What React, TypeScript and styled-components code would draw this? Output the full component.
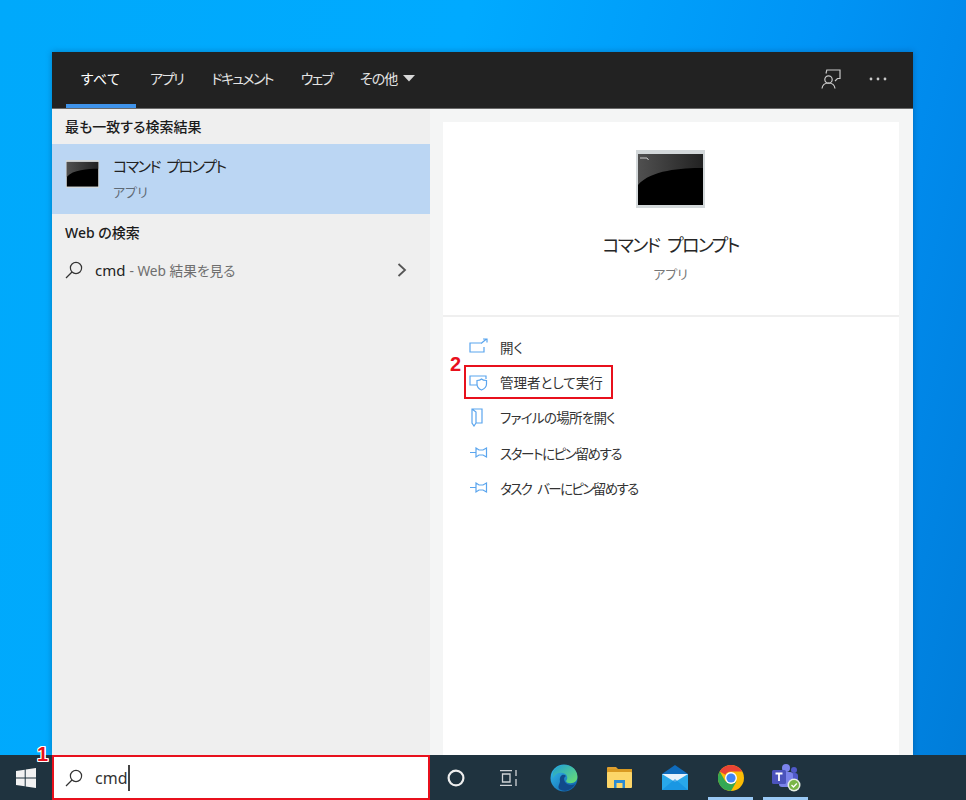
import React from "react";
import styled, { createGlobalStyle } from "styled-components";

const Global = createGlobalStyle`
  html, body { margin: 0; padding: 0; width: 966px; height: 800px; overflow: hidden; }
  body { font-family: "Noto Sans", "Noto Sans CJK JP", sans-serif; font-feature-settings: "palt"; }
  * { box-sizing: border-box; }
`;

const Desktop = styled.div`
  position: relative;
  width: 966px;
  height: 800px;
  padding-top: 52px;
  display: flex;
  flex-direction: column;
  background: linear-gradient(105deg, #00a9fb 0%, #00aaff 40%, #0094f5 70%, #008aec 82%, #007cd8 100%);
`;
const Panel = styled.div`
  margin-left: 52px;
  width: 861px;
  height: 703px;
  display: flex;
  flex-direction: column;
  box-shadow: 0 0 6px rgba(0, 40, 80, 0.35);
`;
const Header = styled.div`
  height: 57px;
  background: #222222;
  border-bottom: 1px solid #6a6a6a;
  display: flex;
  padding-left: 14px;
  align-items: stretch;
`;
const Tab = styled.div<{ $active?: boolean; $ls?: number }>`
  padding: 0 14px;
  min-width: ${(p) => (p.$active ? "70px" : "0")};
  display: flex;
  align-items: center;
  gap: 6px;
  color: ${(p) => (p.$active ? "#fff" : "#e4e4e4")};
  font-size: 14px;
  letter-spacing: ${(p) => p.$ls ?? 0}px;
  font-feature-settings: ${(p) => (p.$active ? '"palt" 0' : '"palt" 1')};
  border-bottom: 4px solid ${(p) => (p.$active ? "#3f93ea" : "transparent")};
`;
const HeaderActions = styled.div`
  margin-left: auto;
  display: flex;
  align-items: center;
  padding-right: 26px;
  gap: 28px;
  padding-bottom: 2px;
`;
const Body = styled.div`
  flex: 1;
  display: flex;
  min-height: 0;
`;
const Left = styled.div`
  width: 378px;
  background: #efefef;
  display: flex;
  flex-direction: column;
`;
const SectionLabel = styled.div<{ $h: number }>`
  height: ${(p) => p.$h}px;
  padding: 0 0 2px 13px;
  display: flex;
  align-items: center;
  font-size: 14px;
  font-weight: 500;
  color: #1c1c1c;
`;
const BestRow = styled.div`
  height: 70px;
  background: #bbd6f3;
  display: flex;
  align-items: center;
  padding-left: 13px;
  gap: 13px;
`;
const SmallIconSlot = styled.div`
  display: flex;
  margin-bottom: 10px;
`;
const BestText = styled.div`
  display: flex;
  flex-direction: column;
  gap: 5px;
  padding-bottom: 1px;
`;
const BestTitle = styled.div`
  font-size: 15px;
  line-height: 22px;
  letter-spacing: -1.5px;
  word-spacing: 4px;
  color: #222;
`;
const BestSub = styled.div`
  font-size: 13px;
  line-height: 20px;
  color: #5f6a75;
`;
const WebRow = styled.div`
  height: 38px;
  display: flex;
  align-items: center;
  padding: 0 23px 0 13px;
  font-size: 15px;
  color: #222;
`;
const WebQuery = styled.span`
  margin-left: 12px;
`;
const WebHint = styled.span`
  font-size: 13.7px;
  color: #6e6e6e;
  margin-left: 4px;
`;
const Chevron = styled.span`
  margin-left: auto;
  display: flex;
`;
const Right = styled.div`
  flex: 1;
  background: #f4f5f5;
  padding: 13px 14px 0 13px;
  display: flex;
`;
const Card = styled.div`
  flex: 1;
  background: #fff;
  display: flex;
  flex-direction: column;
`;
const Hero = styled.div`
  height: 195px;
  border-bottom: 2px solid #efefef;
  display: flex;
  flex-direction: column;
  align-items: center;
  padding: 28px 1px 0 0;
`;
const HeroTitle = styled.div`
  margin-top: 22px;
  font-size: 18px;
  line-height: 30px;
  letter-spacing: -1.7px;
  word-spacing: 5px;
  color: #262626;
`;
const HeroSub = styled.div`
  margin-top: 3px;
  font-size: 13px;
  line-height: 22px;
  color: #777;
`;
const Actions = styled.div`
  padding: 12.5px 0 0 26px;
  display: flex;
  flex-direction: column;
`;
const ActionRow = styled.div<{ $ls?: number; $ws?: number }>`
  height: 35.2px;
  display: flex;
  align-items: center;
  gap: 12px;
  font-size: 13.5px;
  letter-spacing: ${(p) => p.$ls ?? 0}px;
  word-spacing: ${(p) => p.$ws ?? 0}px;
  color: #333;
`;
const ActionIcon = styled.svg`
  width: 19px;
  height: 19px;
  flex: none;
  fill: none;
  stroke: #5aa5ee;
  stroke-width: 1.2;
`;
const RedBox = styled.div`
  position: absolute;
  left: 464px;
  top: 365px;
  width: 149px;
  height: 34px;
  border: 2px solid #e8101c;
`;
const Badge = styled.div<{ $x: number; $y: number; $halo?: boolean }>`
  position: absolute;
  left: ${(p) => p.$x}px;
  top: ${(p) => p.$y}px;
  font-family: "Liberation Sans", sans-serif;
  font-weight: 700;
  font-size: 20px;
  line-height: 20px;
  color: #e8101c;
  ${(p) =>
    p.$halo
      ? "text-shadow: 1px 0 0 #fff, -1px 0 0 #fff, 0 1px 0 #fff, 0 -1px 0 #fff, 1px 1px 0 #fff, -1px -1px 0 #fff, 1px -1px 0 #fff, -1px 1px 0 #fff;"
      : ""}
`;
const Taskbar = styled.div`
  height: 45px;
  background: #1f333f;
  display: flex;
  align-items: stretch;
  position: relative;
`;
const StartButton = styled.div`
  width: 52px;
  display: flex;
  align-items: center;
  justify-content: center;
`;
const SearchBox = styled.div`
  width: 378px;
  background: #fff;
  border: 2px solid #e8101c;
  display: flex;
  align-items: center;
  padding-left: 11px;
  font-size: 16px;
  color: #333;
`;
const SearchText = styled.span`
  margin-left: 12px;
`;
const Caret = styled.span`
  width: 2px;
  height: 26px;
  background: #444;
  margin-left: 1px;
`;
const TaskItem = styled.div<{ $w: number; $active?: boolean }>`
  width: ${(p) => p.$w}px;
  display: flex;
  align-items: center;
  justify-content: center;
  border-bottom: 3px solid ${(p) => (p.$active ? "#99c9f5" : "transparent")};
  border-top: 3px solid transparent;
`;

const SearchGlyph = ({ color = "#333", size = 18 }: { color?: string; size?: number }) => (
  <svg width={size} height={size} viewBox="0 0 18 18" fill="none" stroke={color} strokeWidth="1.2">
    <circle cx="11" cy="7" r="5.6" />
    <path d="M7 11 L1 17" />
  </svg>
);

const CmdIcon = ({ w, h, id, prompt }: { w: number; h: number; id: string; prompt?: boolean }) => (
  <svg width={w} height={h} viewBox="0 0 69 58">
    <defs>
      <linearGradient id={id} x1="0" y1="0" x2="1" y2="0">
        <stop offset="0" stopColor="#505050" />
        <stop offset="1" stopColor="#222" />
      </linearGradient>
    </defs>
    <rect x="0" y="0" width="69" height="58" fill="#d3d8da" />
    <rect x="2" y="4" width="65" height="51" fill="#000" />
    <path d="M2 4 H67 V18 C45 18 15 20 2 35 Z" fill={`url(#${id})`} />
    {prompt && <path d="M4 8 h7 M11 8 l1.5 2" stroke="#cfcfcf" strokeWidth="1" fill="none" />}
  </svg>
);

const WindowsLogo = () => (
  <svg width="20" height="20" viewBox="0 0 20 20" fill="#f2f2f2">
    <path d="M0 3 L8.7 1.8 V9.4 H0 Z M9.7 1.6 L20 0 V9.4 H9.7 Z M0 10.5 H8.7 V18.2 L0 17 Z M9.7 10.5 H20 V20 L9.7 18.4 Z" />
  </svg>
);

const EdgeLogo = () => (
  <svg width="28" height="28" viewBox="0 0 28 28">
    <defs>
      <linearGradient id="edgeA" x1="0" y1="0" x2="1" y2="1">
        <stop offset="0" stopColor="#35c1f1" />
        <stop offset="1" stopColor="#0c59a4" />
      </linearGradient>
      <linearGradient id="edgeB" x1="0" y1="0" x2="1" y2="1">
        <stop offset="0" stopColor="#1e9ed8" />
        <stop offset="1" stopColor="#6ce06e" />
      </linearGradient>
    </defs>
    <circle cx="14" cy="14" r="13.5" fill="url(#edgeA)" />
    <path d="M3 8 C6 1 16 -1 22 3 C27 6 29 13 26 17 C23 20 17 20 16 17 C18 15 18 10 13 9 C8 8 5 10 3 14 Z" fill="url(#edgeB)" />
    <path d="M10 17 C9 12 13 9 16 12 C14 13 13.5 15 15 18 C17 21 22 22 25 20 C22 26 15 28 11 26 C6 24 10 20 10 17 Z" fill="#114a8b" />
  </svg>
);

const FolderLogo = () => (
  <svg width="25" height="23" viewBox="0 0 25 23">
    <path d="M0 2 a1 1 0 0 1 1-1 H9 L11 3 H0 Z" fill="#e0a030" />
    <rect x="0" y="3" width="25" height="4" fill="#d99a22" />
    <rect x="0" y="6" width="25" height="16" rx="1" fill="#fcd669" />
    <path d="M7 22 V14 H18 V22 H15.5 V17 H9.5 V22 Z" fill="#2a8bd4" />
  </svg>
);

const MailLogo = () => (
  <svg width="28" height="26" viewBox="0 0 28 26">
    <path d="M14 0 L27 9 H1 Z" fill="#0f6cbd" />
    <rect x="1" y="9" width="26" height="16" fill="#28a8ea" />
    <path d="M1 9 H27 L14 17 Z" fill="#e8f2fb" />
    <path d="M1 25 L14 14 L27 25 Z" fill="#1490df" opacity="0.7" />
  </svg>
);

const ChromeLogo = () => (
  <svg width="26" height="26" viewBox="0 0 48 48">
    <circle cx="24" cy="24" r="24" fill="#fbbc05" />
    <path d="M24 0 A24 24 0 0 1 44.8 12 H24 A12 12 0 0 0 13.6 18 L3.2 12 A24 24 0 0 1 24 0 Z" fill="#ea4335" />
    <path d="M3.2 12 L13.6 30 A12 12 0 0 0 24 36 L13.6 46 A24 24 0 0 1 3.2 12 Z" fill="#34a853" />
    <path d="M13.6 30 L24 36 L34.4 30 L24 48 A24 24 0 0 1 11 44 Z" fill="#34a853" />
    <circle cx="24" cy="24" r="11" fill="#fff" />
    <circle cx="24" cy="24" r="8.5" fill="#4285f4" />
  </svg>
);

const TeamsLogo = () => (
  <svg width="30" height="30" viewBox="0 0 30 30">
    <circle cx="15" cy="5" r="4" fill="#7b83eb" />
    <circle cx="23" cy="7" r="3" fill="#5059c9" />
    <rect x="17" y="10" width="10" height="12" rx="3" fill="#5059c9" />
    <rect x="8" y="9" width="14" height="15" rx="3" fill="#7b83eb" />
    <rect x="1" y="7" width="14" height="14" rx="1.5" fill="#4b53bc" />
    <path d="M4.5 10.5 H11.5 M8 10.5 V18" stroke="#fff" strokeWidth="1.8" fill="none" />
    <circle cx="23" cy="22" r="6.5" fill="#e8efe4" />
    <circle cx="23" cy="22" r="5" fill="#7ab648" />
    <path d="M20.5 22 L22.5 24 L25.8 20.5" stroke="#fff" strokeWidth="1.3" fill="none" />
  </svg>
);

export default function App() {
  return (
    <Desktop>
      <Global />
      <Panel>
        <Header>
          <Tab $active>すべて</Tab>
          <Tab $ls={-1.3}>アプリ</Tab>
          <Tab $ls={-1.7}>ドキュメント</Tab>
          <Tab $ls={-1.7}>ウェブ</Tab>
          <Tab $ls={-1}>
            その他
            <svg width="12" height="7" viewBox="0 0 12 7" fill="#d8d8d8">
              <path d="M0 0 H12 L6 6.5 Z" />
            </svg>
          </Tab>
          <HeaderActions>
            <svg width="20" height="20" viewBox="0 0 20 20" fill="none" stroke="#c9c9c9" strokeWidth="1.2">
              <path d="M5 4.5 L5.8 1 H19 V9.5 H16.5 L14 12" />
              <circle cx="7.5" cy="10.5" r="3.7" />
              <path d="M1 19.5 C1.5 15.5 4 14 7.5 14 C11 14 13.5 15.5 14 19.5" />
            </svg>
            <svg width="18" height="4" viewBox="0 0 18 4" fill="#c9c9c9">
              <circle cx="2" cy="2" r="1.4" />
              <circle cx="9" cy="2" r="1.4" />
              <circle cx="16" cy="2" r="1.4" />
            </svg>
          </HeaderActions>
        </Header>
        <Body>
          <Left>
            <SectionLabel $h={35}>最も一致する検索結果</SectionLabel>
            <BestRow>
              <SmallIconSlot>
                <CmdIcon w={35} h={28} id="cmdSmall" />
              </SmallIconSlot>
              <BestText>
                <BestTitle>コマンド プロンプト</BestTitle>
                <BestSub>アプリ</BestSub>
              </BestText>
            </BestRow>
            <SectionLabel $h={37}>Web の検索</SectionLabel>
            <WebRow>
              <SearchGlyph />
              <WebQuery>cmd</WebQuery>
              <WebHint>- Web 結果を見る</WebHint>
              <Chevron>
                <svg width="10" height="14" viewBox="0 0 10 14" fill="none" stroke="#555" strokeWidth="1.8">
                  <path d="M1.5 1 L8 7 L1.5 13" />
                </svg>
              </Chevron>
            </WebRow>
          </Left>
          <Right>
            <Card>
              <Hero>
                <CmdIcon w={69} h={58} id="cmdLarge" prompt />
                <HeroTitle>コマンド プロンプト</HeroTitle>
                <HeroSub>アプリ</HeroSub>
              </Hero>
              <Actions>
                <ActionRow>
                  <ActionIcon viewBox="0 0 19 19">
                    <path d="M13 5 H1 V14 H15 V9 M12 5.5 L17.5 1 M14 1 H18 V4.5" />
                  </ActionIcon>
                  開く
                </ActionRow>
                <ActionRow>
                  <ActionIcon viewBox="0 0 19 19">
                    <path d="M8 12 H1 V3 H17 V6" />
                    <path d="M8 7.5 C10 7.5 11.5 7 12.5 6 C13.5 7 15.5 7.5 17.5 7.5 V11 C17.5 14 15 16 12.5 17 C10 16 8 14 8 11 Z" />
                  </ActionIcon>
                  管理者として実行
                </ActionRow>
                <ActionRow $ls={-0.7}>
                  <ActionIcon viewBox="0 0 19 19">
                    <path d="M3 1 H13 V15 H7 L5 18 L3 15 Z M3 1 L7 4 V15" />
                  </ActionIcon>
                  ファイルの場所を開く
                </ActionRow>
                <ActionRow $ls={-1.4}>
                  <ActionIcon viewBox="0 0 19 19">
                    <path d="M1 9.5 H7 M7 5 L10 7 H14 L17.5 5 V14 L14 12 H10 L7 14 Z" />
                  </ActionIcon>
                  スタートにピン留めする
                </ActionRow>
                <ActionRow $ls={-1.6} $ws={4}>
                  <ActionIcon viewBox="0 0 19 19">
                    <path d="M1 9.5 H7 M7 5 L10 7 H14 L17.5 5 V14 L14 12 H10 L7 14 Z" />
                  </ActionIcon>
                  タスク バーにピン留めする
                </ActionRow>
              </Actions>
            </Card>
          </Right>
        </Body>
      </Panel>
      <Taskbar>
        <StartButton>
          <WindowsLogo />
        </StartButton>
        <SearchBox>
          <SearchGlyph />
          <SearchText>cmd</SearchText>
          <Caret />
        </SearchBox>
        <TaskItem $w={52}>
          <svg width="18" height="18" viewBox="0 0 18 18" fill="none" stroke="#eee" strokeWidth="2.2">
            <circle cx="9" cy="9" r="7.4" />
          </svg>
        </TaskItem>
        <TaskItem $w={53}>
          <svg width="18" height="16" viewBox="0 0 18 16" fill="none" stroke="#cfd3d6" strokeWidth="1.3">
            <path d="M0 .7 H12 M0 15.3 H12 M2.5 4 H10 V12 H2.5 Z M16 0 V6 M16 9 V16" />
          </svg>
        </TaskItem>
        <TaskItem $w={57}>
          <EdgeLogo />
        </TaskItem>
        <TaskItem $w={55}>
          <FolderLogo />
        </TaskItem>
        <TaskItem $w={55}>
          <MailLogo />
        </TaskItem>
        <TaskItem $w={6} />
        <TaskItem $w={45} $active>
          <ChromeLogo />
        </TaskItem>
        <TaskItem $w={10} />
        <TaskItem $w={45} $active>
          <TeamsLogo />
        </TaskItem>
      </Taskbar>
      <RedBox />
      <Badge $x={450} $y={354}>2</Badge>
      <Badge $x={37} $y={744} $halo>1</Badge>
    </Desktop>
  );
}
